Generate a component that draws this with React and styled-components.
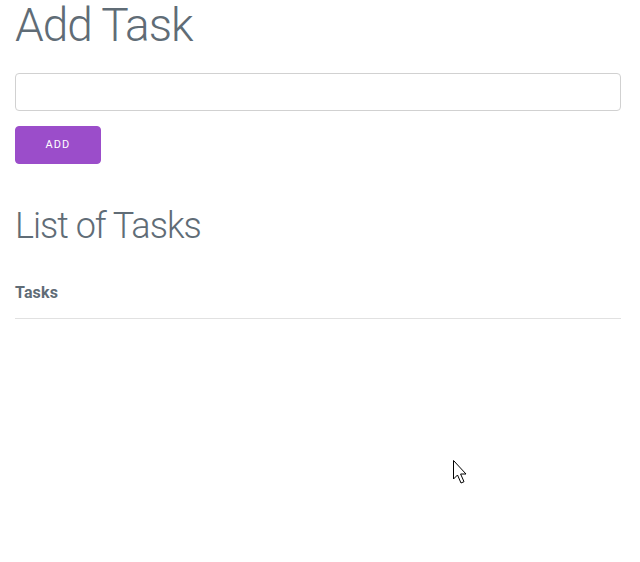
import React from "react"
import styled, { createGlobalStyle } from "styled-components"

const GlobalStyle = createGlobalStyle`
  html, body {
    margin: 0;
    padding: 0;
    background: #fff;
  }
  body {
    color: #606c76;
    font-family: Roboto, "Helvetica Neue", Helvetica, Arial, sans-serif;
    font-size: 16px;
    font-weight: 300;
    letter-spacing: .01em;
    line-height: 1.6;
  }
  * {
    box-sizing: border-box;
  }
`;

const Page = styled.div`
  position: relative;
  width: 640px;
  height: 562px;
  overflow: hidden;
  padding: 0 19px 0 15px;
`;

const Title = styled.h1`
  margin: 0 0 22px;
  font-size: 46px;
  font-weight: 300;
  line-height: 51px;
  letter-spacing: -1px;
`;

const SubTitle = styled.h2`
  margin: 0 0 19px;
  font-size: 36px;
  font-weight: 300;
  line-height: 1.25;
  letter-spacing: -1px;
`;

const Form = styled.form`
  display: flex;
  flex-direction: column;
  align-items: flex-start;
  margin: 0 0 40px;
`;

const Input = styled.input`
  width: 100%;
  height: 38px;
  margin: 0 0 15px;
  padding: 6px 10px;
  border: 1px solid #d1d1d1;
  border-radius: 4px;
  background: transparent;
  font-family: inherit;
  font-size: 16px;
  outline: none;
`;

const Button = styled.button`
  height: 38px;
  padding: 0 29.5px;
  border: 1px solid #9b4dca;
  border-radius: 4px;
  background-color: #9b4dca;
  color: #fff;
  font-family: inherit;
  font-size: 11px;
  font-weight: 400;
  letter-spacing: 1px;
  line-height: 36px;
  text-transform: uppercase;
  cursor: pointer;
`;

const Table = styled.table`
  width: 100%;
  border-collapse: collapse;
  border-spacing: 0;
`;

const Th = styled.th`
  padding: 12px 15px 12px 0;
  border-bottom: 1px solid #e1e1e1;
  text-align: left;
  font-weight: 700;
`;

const Cursor = styled.svg`
  position: absolute;
  left: 452px;
  top: 459px;
`;

export default function App() {
  return (
    <Page>
      <GlobalStyle />
      <Title>Add Task</Title>
      <Form onSubmit={e => e.preventDefault()}>
        <Input type="text" />
        <Button type="submit">Add</Button>
      </Form>
      <SubTitle>List of Tasks</SubTitle>
      <Table>
        <thead>
          <tr>
            <Th>Tasks</Th>
          </tr>
        </thead>
        <tbody />
      </Table>
      <Cursor width="18" height="28" viewBox="0 0 18 28">
        <path
          d="M1.5 1.5 L1.5 20 L5.5 16 L9 24 L12 22.7 L8.6 15 L14 15 Z"
          fill="#fff"
          stroke="#000"
          strokeWidth="1"
          strokeLinejoin="miter"
        />
      </Cursor>
    </Page>
  );
}
